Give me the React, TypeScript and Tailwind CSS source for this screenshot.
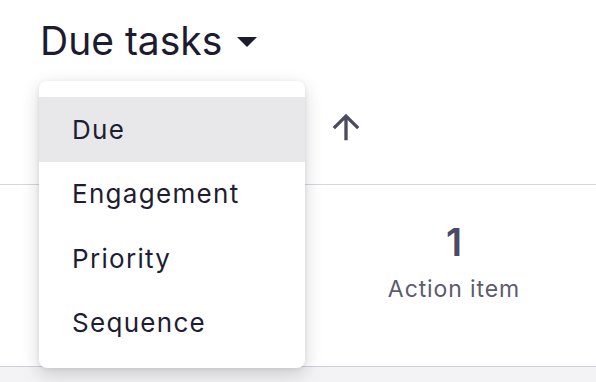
import React from "react";

export default function App() {
  const items = ["Due", "Engagement", "Priority", "Sequence"];
  return (
    <div
      className="relative w-[596px] h-[382px] overflow-hidden bg-white text-[#1c1b2f]"
      style={{ fontFamily: "Inter, 'Noto Sans', sans-serif" }}
    >
      <div className="flex flex-col h-full">
        {/* header */}
        <div className="h-[80px] pl-[40px] pt-[17px] flex items-start">
          <div className="flex items-center gap-[15px]">
            <span className="text-[39px] leading-[48px] tracking-[0px]">Due tasks</span>
            <svg width="20" height="10" viewBox="0 0 20 10" className="mt-[2px]">
              <path d="M0 0 L20 0 L10 10 Z" fill="#1c1b2f" />
            </svg>
          </div>
        </div>
        {/* tab row */}
        <div className="h-[105px] flex items-start pl-[330px] pt-[33px] border-b border-[#d7d6dd]">
          <svg width="40" height="40" viewBox="0 0 24 24" className="-mt-[6px] -ml-[4px]">
            <path
              d="M4 12l1.41 1.41L11 7.83V20h2V7.83l5.58 5.59L20 12l-8-8-8 8z"
              fill="#4b4a60"
            />
          </svg>
        </div>
        {/* stats */}
        <div className="h-[182px] flex border-b border-[#d0cfd8]">
          <div className="ml-[364px] w-[180px] flex flex-col items-center pt-[35px]">
            <span className="text-[38px] leading-[44px] font-semibold text-[#4b4a60]">1</span>
            <span className="mt-[11px] text-[23px] leading-[28px] tracking-[0.9px] text-[#5c5b6f]">
              Action item
            </span>
          </div>
        </div>
        <div className="flex-1 bg-[#f3f3f5]" />
      </div>

      {/* dropdown menu */}
      <div className="absolute left-[39px] top-[81px] w-[266px] h-[287px] bg-white rounded-[8px] shadow-[0_6px_18px_rgba(20,20,40,0.18),0_1px_4px_rgba(20,20,40,0.08)] pt-[16px]">
        {items.map((it, i) => (
          <div
            key={it}
            className={`h-[64.5px] flex items-center pl-[33px] text-[26px] tracking-[1.3px] text-[#1e1d32] ${
              i === 0 ? "bg-[#e8e8eb]" : ""
            }`}
          >
            {it}
          </div>
        ))}
      </div>
    </div>
  );
}
